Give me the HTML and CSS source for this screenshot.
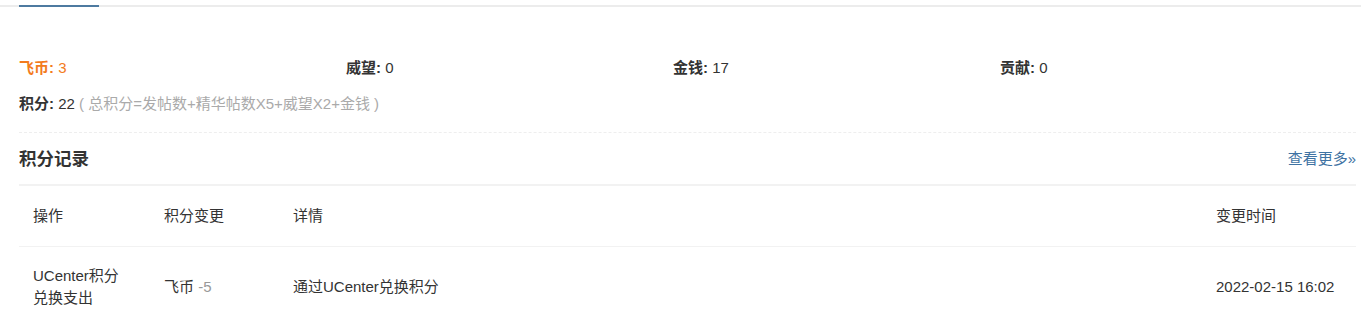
FILE: index.html
```html
<!DOCTYPE html>
<html lang="zh-CN">
<head>
<meta charset="utf-8">
<title>积分</title>
<link rel="stylesheet" href="styles.css">
</head>
<body>
<div class="tabs"><span class="tab-active"></span></div>
<div class="content">
  <div class="stats">
    <div class="stat stat-hl"><b>飞币:</b> 3</div>
    <div class="stat"><b>威望:</b> 0</div>
    <div class="stat"><b>金钱:</b> 17</div>
    <div class="stat"><b>贡献:</b> 0</div>
    <div class="stat stat-wide"><b>积分:</b> 22 <span class="note">( 总积分=发帖数+精华帖数X5+威望X2+金钱 )</span></div>
  </div>
  <div class="section-head">
    <h3 class="section-title">积分记录</h3>
    <a class="more" href="#">查看更多»</a>
  </div>
  <div class="table">
    <div class="row row-head">
      <div class="cell c1">操作</div>
      <div class="cell">积分变更</div>
      <div class="cell">详情</div>
      <div class="cell">变更时间</div>
    </div>
    <div class="row row-data">
      <div class="cell c1">UCenter积分兑换支出</div>
      <div class="cell">飞币 <span class="delta">-5</span></div>
      <div class="cell">通过UCenter兑换积分</div>
      <div class="cell">2022-02-15 16:02</div>
    </div>
  </div>
</div>
</body>
</html>
```
FILE: styles.css
```css
* { box-sizing: border-box; }
body {
  margin: 0;
  font-family: "Liberation Sans", "Noto Sans CJK SC", sans-serif;
  font-size: 15px;
  color: #333;
  background: #fff;
}
.tabs {
  height: 7px;
  border-bottom: 2px solid #ececec;
  position: relative;
}
.tab-active {
  position: absolute;
  left: 19px;
  bottom: -2px;
  width: 80px;
  height: 2px;
  background: #4d7aa0;
}
.content {
  padding: 0 5px 0 19px;
}
.stats {
  display: grid;
  grid-template-columns: repeat(4, 327px);
  row-gap: 12px;
  padding-top: 49px;
  padding-bottom: 16px;
  border-bottom: 1px dashed #eee;
}
.stat {
  line-height: 24px;
}
.stat b { font-weight: bold; }
.stat-hl { color: #f37b1d; }
.stat-wide { grid-column: 1 / -1; }
.note { color: #aaa; }
.section-head {
  display: flex;
  justify-content: space-between;
  align-items: center;
  padding: 14px 0 13px;
  border-bottom: 2px solid #f2f2f2;
}
.section-title {
  margin: 0;
  font-size: 17.5px;
  font-weight: bold;
  line-height: 24px;
  color: #333;
}
.more {
  color: #3f73a3;
  text-decoration: none;
  line-height: 24px;
}
.row {
  display: grid;
  grid-template-columns: 131px 129px 1fr 154px;
  align-items: center;
}
.row-head {
  height: 61px;
  border-bottom: 1px solid #f2f2f2;
}
.row-data {
  height: 80px;
}
.cell {
  padding: 0 14px;
  line-height: 22px;
}
.c1 { padding-right: 24px; }
.delta { color: #999; }
```
